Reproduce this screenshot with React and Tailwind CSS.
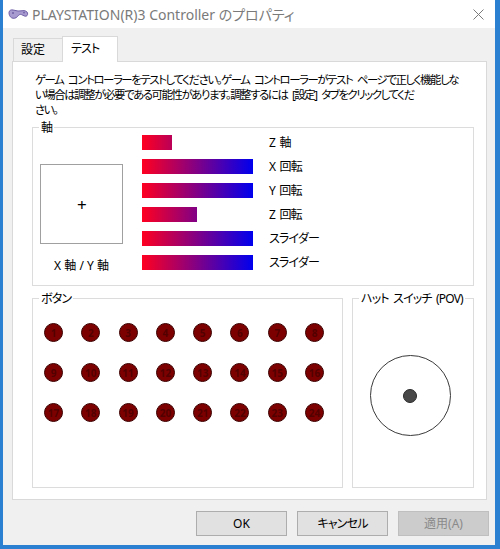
import React from 'react'

const bars = [
  { w: 30, label: 'Z 軸' },
  { w: 111, label: 'X 回転' },
  { w: 111, label: 'Y 回転' },
  { w: 55, label: 'Z 回転' },
  { w: 111, label: 'スライダー' },
  { w: 111, label: 'スライダー' },
]

const buttons = Array.from({ length: 24 }, (_, i) => i + 1)

function ControllerIcon() {
  return (
    <svg width="21" height="12" viewBox="0 0 21 12">
      <path
        d="M1 4.5 C1 2.5 3 1.5 5 2 L10 3 C12 3.3 14 2.4 16 2.6 C18.5 2.9 20 4.5 19.6 6.4 C19.2 8.3 17.4 8.6 16 7.8 L13.5 6.6 C12 6 10.8 6.8 9.6 8.4 C8 10.4 5.4 10.8 3.6 9.8 C1.8 8.8 1 6.8 1 4.5 Z"
        fill="#a89bd0"
        stroke="#6f5fa6"
        strokeWidth="1"
      />
      <circle cx="5" cy="5" r="1" fill="#6f5fa6" />
      <circle cx="16" cy="4.6" r="0.9" fill="#6f5fa6" />
    </svg>
  )
}

function CloseIcon() {
  return (
    <svg width="11" height="11" viewBox="0 0 11 11" className="ml-auto">
      <path d="M0.5 0.5 L10.5 10.5 M10.5 0.5 L0.5 10.5" stroke="#7a7a7a" strokeWidth="1" />
    </svg>
  )
}

function Group({ label, className, children }) {
  return (
    <fieldset className={`border border-[#dcdcdc] ${className}`}>
      <legend className="ml-[6px] px-[2px] leading-[15px] whitespace-nowrap">{label}</legend>
      {children}
    </fieldset>
  )
}

export default function App() {
  return (
    <div className="w-[500px] h-[549px] bg-[#2b80d2] pl-[3px] pr-[5px] pb-[4px] font-['Noto_Sans','Noto_Sans_CJK_JP',sans-serif] [font-feature-settings:'palt'] text-[12px] tracking-[-0.8px] [word-spacing:2px] text-black">
      <div className="h-full bg-[#f0f0f0] flex flex-col">
        {/* title bar */}
        <div className="h-[28px] shrink-0 bg-white flex items-center pl-[5px] pr-[11px] tracking-normal [word-spacing:0px]">
          <ControllerIcon />
          <span className="ml-[3px] text-[14px] text-[#7a7a7a] whitespace-nowrap">
            PLAYSTATION(R)3 Controller のプロパティ
          </span>
          <CloseIcon />
        </div>

        {/* tabs */}
        <div className="h-[34px] shrink-0 flex items-end pl-[10px] -mb-px relative z-10">
          <div className="h-[24px] w-[50px] pl-[7px] flex items-center border border-[#d9d9d9] bg-[#f0f0f0] tracking-normal">
            設定
          </div>
          <div className="h-[26px] w-[56px] -ml-px pl-[8px] pb-[2px] flex items-center border border-[#d9d9d9] border-b-0 bg-white">
            テスト
          </div>
        </div>

        {/* panel */}
        <div className="h-[439px] shrink-0 ml-[9px] mr-[8px] bg-white border border-[#d9d9d9]">
          <p className="pl-[22px] pt-[10px] text-[11.4px] tracking-[-1.4px] [word-spacing:3px] leading-[15px] whitespace-nowrap">
            ゲーム コントローラーをテストしてください。ゲーム コントローラーがテスト ページで正しく機能しな
            <br />
            い場合は調整が必要である可能性があります。調整するには [設定] タブをクリックしてくだ
            <br />
            さい。
          </p>

          <Group label="軸" className="ml-[19px] mr-[12px] mt-[3px]">
            <div className="flex pb-[12px]">
              <div className="ml-[7px] w-[83px]">
                <div className="mt-[29px] h-[80px] border border-[#a0a0a0] flex items-center justify-center text-[17px] leading-none">
                  +
                </div>
                <div className="mt-[14px] leading-[15px] text-center tracking-normal [word-spacing:0px]">X 軸 / Y 軸</div>
              </div>
              <div className="ml-[19px] flex flex-col gap-[9px]">
                {bars.map((b, i) => (
                  <div key={i} className="h-[15px] flex items-center">
                    <div className="w-[111px] h-[15px]">
                      <div
                        className="h-full bg-[linear-gradient(to_right,#ff0020,#0000ee)] bg-[length:111px_100%] bg-no-repeat"
                        style={{ width: b.w }}
                      />
                    </div>
                    <span className="ml-[16px] whitespace-nowrap">{b.label}</span>
                  </div>
                ))}
              </div>
            </div>
          </Group>

          <div className="flex ml-[19px] mr-[12px] mt-[5px] gap-[9px] h-[197px]">
            <Group label="ボタン" className="w-[311px] h-full">
              <div className="grid grid-cols-[repeat(8,19px)] gap-x-[18.3px] gap-y-[21px] pl-[11px] pt-[17px]">
                {buttons.map(n => (
                  <div
                    key={n}
                    className="w-[19px] h-[19px] rounded-full bg-[#7d0000] border border-[#3c0000] flex items-center justify-center text-[10px] font-bold tracking-normal text-[#520000] leading-none"
                  >
                    {n}
                  </div>
                ))}
              </div>
            </Group>
            <Group label="ハット スイッチ (POV)" className="flex-1 h-full flex flex-col">
              <div className="flex-1 flex items-center justify-center pr-[6px] pb-[2px]">
                <div className="w-[81px] h-[81px] rounded-full border border-[#3a3a3a] flex items-center justify-center">
                  <div className="w-[14px] h-[14px] rounded-full bg-[#484848] border border-[#2a2a2a]" />
                </div>
              </div>
            </Group>
          </div>
        </div>

        {/* dialog buttons */}
        <div className="mt-[11px] flex justify-end gap-[10px] pr-[6px]">
          <button className="w-[91px] h-[25px] border border-[#adadad] bg-[#e1e1e1] tracking-normal">OK</button>
          <button className="w-[91px] h-[25px] border border-[#adadad] bg-[#e1e1e1]">キャンセル</button>
          <button className="w-[91px] h-[25px] border border-[#bfbfbf] bg-[#cccccc] text-[#8a8a8a] tracking-normal" disabled>
            適用(A)
          </button>
        </div>
      </div>
    </div>
  )
}
